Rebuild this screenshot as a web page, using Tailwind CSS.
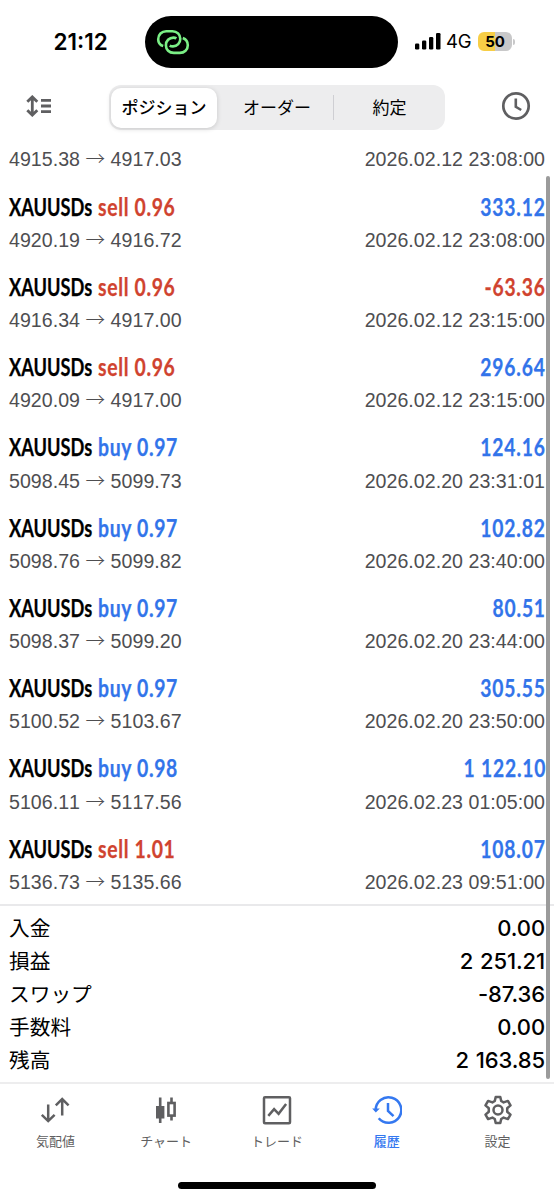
<!DOCTYPE html>
<html lang="ja">
<head>
<meta charset="utf-8">
<title>履歴</title>
<script src="https://cdn.jsdelivr.net/npm/@tailwindcss/browser@4"></script>
</head>
<body class="bg-white">
<div class="relative flex h-[1200px] w-[554px] flex-col overflow-hidden bg-white font-['Liberation_Sans','Noto_Sans_CJK_JP',sans-serif] text-black">

  <!-- Status bar -->
  <header class="flex h-[76px] shrink-0 items-start pt-[15.5px]">
    <div class="flex h-[52px] w-[145px] items-center pl-[53.5px] font-['Inter',sans-serif] text-[22.5px] font-semibold">21:12</div>
    <div class="flex h-[52px] w-[253px] items-center rounded-full bg-black pl-[11px]">
      <svg class="h-[26px] w-[34px]" viewBox="0 0 34 26" fill="none" stroke="#7bef86" stroke-width="2.6" stroke-linecap="butt">
        <path d="M7.200 17.100C3.800 16 2.200 13.200 2.200 10.200 2.200 5.600 5.600 2.200 10.200 2.200H16.500C21 2.200 24.300 5.400 24.300 9.800 24.300 14.100 21.200 17.400 17 17.400 15.900 17.400 14.600 17.200 13.700 16.600"/>
        <path d="M20.400 9.400C19.500 8.800 18.500 8.600 17.400 8.600 13.200 8.600 9.900 11.900 9.900 16.200 9.900 20.700 13.200 23.900 17.800 23.900H23.800C28.400 23.900 31.800 20.700 31.800 16.200 31.800 13.100 29.900 10.200 26.800 9"/>
      </svg>
    </div>
    <div class="flex h-[52px] items-center pl-[17px]">
      <svg class="h-[17px] w-[26px]" viewBox="0 0 26 17" fill="#000">
        <rect x="0" y="10.500" width="4.300" height="6" rx="1.300"/><rect x="7" y="7.500" width="4.300" height="9" rx="1.300"/><rect x="14" y="4" width="4.300" height="12.500" rx="1.300"/><rect x="21" y="0" width="4.500" height="16.500" rx="1.300"/>
      </svg>
      <span class="ml-[5px] w-[32px] pt-px font-['Inter',sans-serif] text-[18.5px] tracking-[-0.2px]">4G</span>
      <div class="flex h-[19px] w-[34px] items-center justify-center rounded-[6px] bg-linear-to-r from-[#f7ce46] from-50% to-[#c8c8c9] to-50% pt-px font-['Inter',sans-serif] text-[15px] font-bold">50</div>
      <div class="ml-[1px] h-[6px] w-[2px] rounded-r-full bg-[#c8c8c9]"></div>
    </div>
  </header>

  <!-- Toolbar -->
  <nav class="flex h-[64px] shrink-0 items-start pt-[9px]">
    <div class="flex h-[43px] w-[109px] items-center pb-px pl-[26px]">
      <svg class="h-[22px] w-[26px]" viewBox="0 0 26 22" fill="none" stroke="#5f5f61" stroke-width="2.800">
        <path d="M6.300 2.500V19.500M1.300 6.800 6.300 1.900 11.300 6.800M1.300 15.200 6.300 20.100 11.300 15.200"/>
        <path d="M15 5.300H25M15 11H25M15 16.700H25"/>
      </svg>
    </div>
    <div class="flex h-[45px] w-[336px] items-center rounded-[12px] bg-[#ededee] p-[2px] font-['Noto_Sans_CJK_JP',sans-serif] text-[17px]">
      <div class="flex h-[40px] w-[106px] items-center justify-center rounded-[10px] bg-white pb-px font-medium shadow-[0_1px_5px_rgba(0,0,0,0.16)]">ポジション</div>
      <div class="flex w-[116px] items-center justify-center pb-px pl-1">オーダー</div>
      <div class="h-[25px] w-px bg-[#cfcfd3]"></div>
      <div class="flex flex-1 items-center justify-center pb-px pl-[2px]">約定</div>
    </div>
    <div class="flex h-[43px] items-center pb-px pl-[56px]">
      <svg class="h-[30px] w-[30px]" viewBox="0 0 30 30" fill="none" stroke="#5f5f61" stroke-width="2.700">
        <circle cx="15" cy="15" r="12.700"/><path d="M14.800 7.500V15.800L20.200 19" stroke-width="2.600"/>
      </svg>
    </div>
  </nav>

  <!-- Closed positions -->
  <main class="flex h-[766px] shrink-0 flex-col overflow-hidden border-b-2 border-[#e9e9eb]" id="list"></main>

  <!-- Totals -->
  <section class="flex h-[178px] shrink-0 flex-col border-b-2 border-[#ededee] pt-[6px]" id="totals"></section>

  <!-- Tab bar -->
  <footer class="flex h-[116px] shrink-0 flex-col items-center">
    <div class="grid h-[98px] w-full grid-cols-5 pt-[11px] text-center font-['Noto_Sans_CJK_JP',sans-serif] text-[13px] leading-[20px] text-[#5f5f61]">
      <div class="flex flex-col items-center gap-[6px]">
        <svg class="h-[30px] w-[30px]" viewBox="0 0 30 30" fill="none" stroke="currentColor" stroke-width="2.500"><path d="M8.200 9.500V26M1.800 19.800 8.200 26.100 14.600 19.800M22.200 20.500V4M15.800 10.300 22.200 4 28.600 10.300"/></svg>
        <span>気配値</span>
      </div>
      <div class="flex flex-col items-center gap-[6px]">
        <svg class="h-[30px] w-[30px]" viewBox="0 0 30 30" fill="none" stroke="currentColor" stroke-width="2.600"><path d="M9.200 2.500V28M20.500 2.500V7.500M20.500 21V25.500"/><rect x="5" y="11" width="8.400" height="12.500" fill="currentColor" stroke="none"/><rect x="17.400" y="8" width="6.200" height="12.600"/></svg>
        <span>チャート</span>
      </div>
      <div class="flex flex-col items-center gap-[6px]">
        <svg class="h-[30px] w-[30px]" viewBox="0 0 30 30" fill="none" stroke="currentColor" stroke-width="2.500"><rect x="2" y="2.200" width="26" height="26" rx="1"/><path d="M6.300 20.800 12.100 14.200 16.600 18.800 24.100 9"/></svg>
        <span>トレード</span>
      </div>
      <div class="flex flex-col items-center gap-[6px] pr-[2px] text-[#3478f0]">
        <svg class="h-[30px] w-[30px]" viewBox="0 0 30 30" fill="none" stroke="currentColor" stroke-width="2.500"><path d="M3.700 15.500A12.800 12.800 0 1 1 6.700 23.300"/><path d="M.2 13.500H7.800L3.800 17.600Z" fill="currentColor" stroke="none"/><path d="M16 8V16L21.500 21.200"/></svg>
        <span class="font-medium">履歴</span>
      </div>
      <div class="flex flex-col items-center gap-[6px] pr-[2px]">
        <svg class="h-[30px] w-[30px]" viewBox="0 0 30 30" fill="none" stroke="currentColor" stroke-width="2.500" stroke-linejoin="round"><path d="M12.700 2H17.300L18.200 6 20.600 7.400 24.900 5.900 27.500 10.400 24.200 13.300V16.700L27.500 19.600 24.900 24.100 20.600 22.600 18.200 24 17.300 28H12.700L11.800 24 9.400 22.600 5.100 24.100 2.500 19.600 5.800 16.700V13.300L2.500 10.400 5.100 5.900 9.400 7.400 11.800 6Z"/><circle cx="15" cy="15" r="4.500"/></svg>
        <span>設定</span>
      </div>
    </div>
    <div class="h-[7px] w-[198px] rounded-full bg-black"></div>
  </footer>

  <!-- Scroll indicator -->
  <div class="absolute top-[176px] right-[4px] h-[903px] w-[4.500px] rounded-full bg-[#9b9b9b]"></div>
</div>

<script>
  const positions = [
    ['sell 0.96', '333.12', '4920.19', '4916.72', '2026.02.12 23:08:00'],
    ['sell 0.96', '-63.36', '4916.34', '4917.00', '2026.02.12 23:15:00'],
    ['sell 0.96', '296.64', '4920.09', '4917.00', '2026.02.12 23:15:00'],
    ['buy 0.97', '124.16', '5098.45', '5099.73', '2026.02.20 23:31:01'],
    ['buy 0.97', '102.82', '5098.76', '5099.82', '2026.02.20 23:40:00'],
    ['buy 0.97', '80.51', '5098.37', '5099.20', '2026.02.20 23:44:00'],
    ['buy 0.97', '305.55', '5100.52', '5103.67', '2026.02.20 23:50:00'],
    ['buy 0.98', '1 122.10', '5106.11', '5117.56', '2026.02.23 01:05:00'],
    ['sell 1.01', '108.07', '5136.73', '5135.66', '2026.02.23 09:51:00'],
  ];
  const totals = [['入金', '0.00'], ['損益', '2 251.21'], ['スワップ', '-87.36'], ['手数料', '0.00'], ['残高', '2 163.85']];
  const red = 'text-[#d0432f]', blue = 'text-[#3274ea]';

  const priceLine = (open, close, time) => `
    <div class="flex h-[32px] items-center justify-between pt-[1.200px] text-[19.6px] tracking-[0.03px] text-[#4e4e51] [font-kerning:none]">
      <span class="whitespace-pre">${open} <span class="font-['Noto_Sans_CJK_JP'] font-light leading-none">→</span> ${close}</span>
      <span>${time}</span>
    </div>`;

  document.getElementById('list').innerHTML =
    `<div class="h-[43px] shrink-0 pt-[3px] pr-[9px] pl-[9px]">${priceLine('4915.38', '4917.03', '2026.02.12 23:08:00')}</div>` +
    positions.map(([side, profit, open, close, time]) => `
      <div class="h-[80.25px] shrink-0 px-[9px] pt-[8px]">
        <div class="flex h-[33px] items-center font-['Lato',sans-serif] text-[23.8px] font-bold whitespace-nowrap [-webkit-text-stroke:0.25px]">
          <span class="w-[88.5px]"><span class="inline-block origin-left scale-x-[0.765]">XAUUSDs</span></span>
          <span class="inline-block origin-left scale-x-[0.815] tracking-[0.8px] ${side.startsWith('sell') ? red : blue}">${side}</span>
          <span class="-mr-[1px] ml-auto inline-block origin-right scale-x-[0.81] tracking-[1px] ${profit.startsWith('-') ? red : blue}">${profit}</span>
        </div>
        ${priceLine(open, close, time)}
      </div>`).join('');

  document.getElementById('totals').innerHTML = totals.map(([label, value]) => `
    <div class="flex h-[33px] shrink-0 items-center justify-between px-[9px]">
      <span class="pb-[3px] font-['Noto_Sans_CJK_JP',sans-serif] text-[20.7px] leading-[30px]">${label}</span>
      <span class="font-['Inter',sans-serif] text-[22px] leading-[33px] font-medium tracking-[-0.1px] [word-spacing:1px]">${value}</span>
    </div>`).join('');
</script>
</body>
</html>
